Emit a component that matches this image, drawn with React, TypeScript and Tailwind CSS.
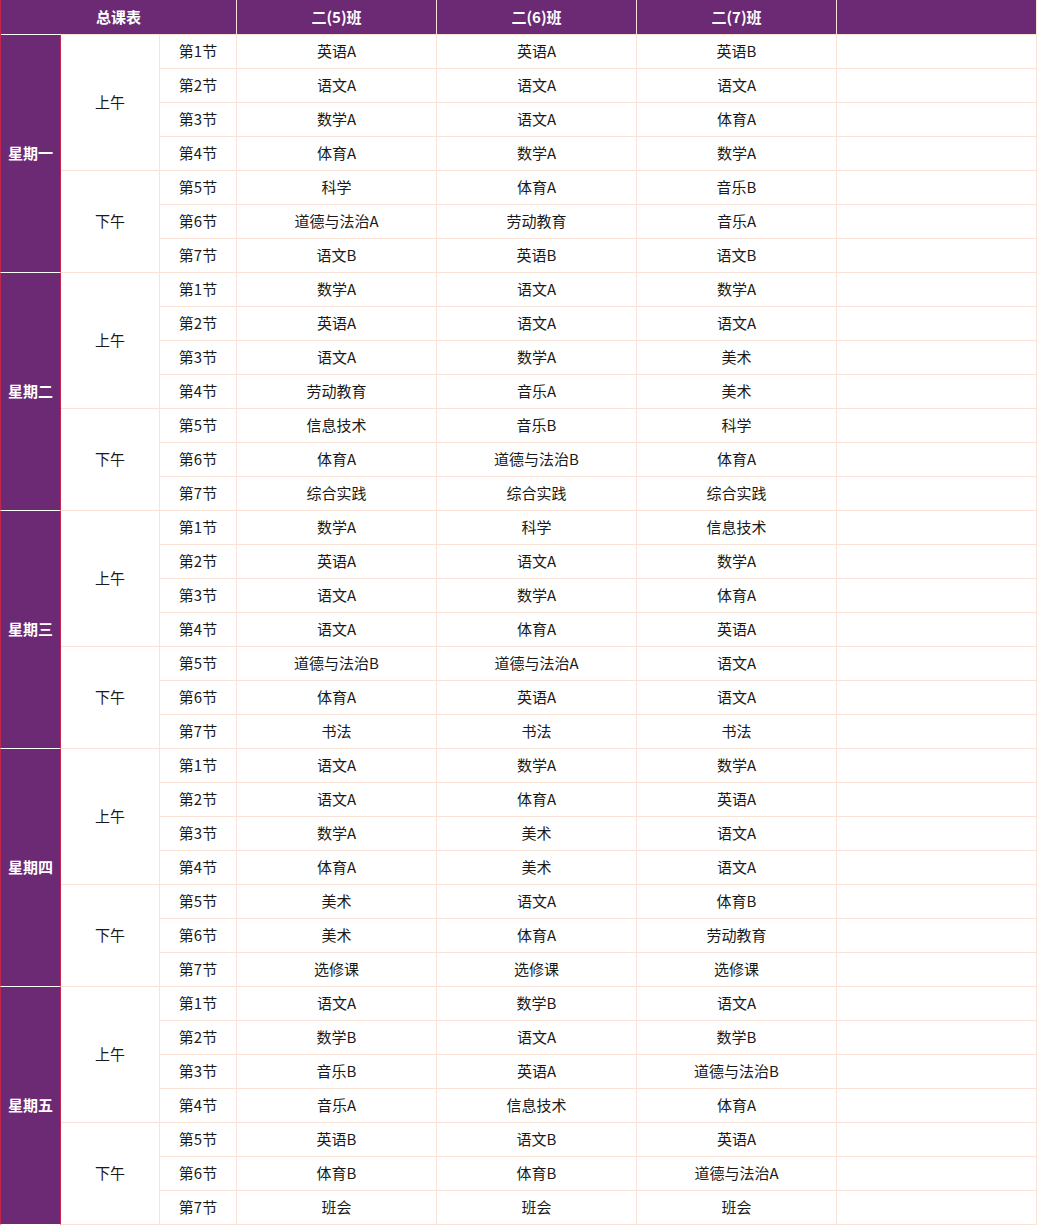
import React from 'react';

const classes = ['二(5)班', '二(6)班', '二(7)班'];

interface Day {
  name: string;
  lessons: string[][];
}

const days: Day[] = [
  {
    name: '星期一',
    lessons: [
      ['英语A', '英语A', '英语B'],
      ['语文A', '语文A', '语文A'],
      ['数学A', '语文A', '体育A'],
      ['体育A', '数学A', '数学A'],
      ['科学', '体育A', '音乐B'],
      ['道德与法治A', '劳动教育', '音乐A'],
      ['语文B', '英语B', '语文B'],
    ],
  },
  {
    name: '星期二',
    lessons: [
      ['数学A', '语文A', '数学A'],
      ['英语A', '语文A', '语文A'],
      ['语文A', '数学A', '美术'],
      ['劳动教育', '音乐A', '美术'],
      ['信息技术', '音乐B', '科学'],
      ['体育A', '道德与法治B', '体育A'],
      ['综合实践', '综合实践', '综合实践'],
    ],
  },
  {
    name: '星期三',
    lessons: [
      ['数学A', '科学', '信息技术'],
      ['英语A', '语文A', '数学A'],
      ['语文A', '数学A', '体育A'],
      ['语文A', '体育A', '英语A'],
      ['道德与法治B', '道德与法治A', '语文A'],
      ['体育A', '英语A', '语文A'],
      ['书法', '书法', '书法'],
    ],
  },
  {
    name: '星期四',
    lessons: [
      ['语文A', '数学A', '数学A'],
      ['语文A', '体育A', '英语A'],
      ['数学A', '美术', '语文A'],
      ['体育A', '美术', '语文A'],
      ['美术', '语文A', '体育B'],
      ['美术', '体育A', '劳动教育'],
      ['选修课', '选修课', '选修课'],
    ],
  },
  {
    name: '星期五',
    lessons: [
      ['语文A', '数学B', '语文A'],
      ['数学B', '语文A', '数学B'],
      ['音乐B', '英语A', '道德与法治B'],
      ['音乐A', '信息技术', '体育A'],
      ['英语B', '语文B', '英语A'],
      ['体育B', '体育B', '道德与法治A'],
      ['班会', '班会', '班会'],
    ],
  },
];

const cell = 'flex items-center justify-center pb-[2px] border-r border-b border-[#fbe2d6] bg-white text-[15px] leading-none text-[#1a1a1a]';
const headCell = 'flex items-center justify-center pb-[2px] border-r border-b border-[#fbe2d6] bg-[#6b2a73] text-[15px] leading-none font-bold text-white';

function PeriodRow({ index, row }: { index: number; row: string[] }) {
  return (
    <>
      <div className={cell}>第{index + 1}节</div>
      {row.map((subject, i) => (
        <div key={i} className={cell}>
          {subject}
        </div>
      ))}
      <div className={cell}></div>
    </>
  );
}

export default function App() {
  return (
    <div
      className="grid w-[1037px] grid-cols-[61px_99px_77px_200px_200px_200px_200px] grid-rows-[35px_repeat(35,34px)]"
      style={{ fontFamily: '"Noto Sans CJK SC", "Noto Sans", sans-serif' }}
    >
      {/* header */}
      <div className="col-span-3 flex flex-col border-l border-r border-l-[#c0264e] border-r-[#fbe2d6] bg-[#6b2a73]">
        <div className="flex flex-1 items-center justify-center pb-[2px] text-[15px] leading-none font-bold text-white">总课表</div>
        <div className="flex h-px">
          <div className="w-[59px] bg-white"></div>
          <div className="flex-1 bg-[#fbe2d6]"></div>
        </div>
      </div>
      {classes.map((c) => (
        <div key={c} className={headCell}>
          {c}
        </div>
      ))}
      <div className={headCell}></div>

      {days.map((day) => (
        <React.Fragment key={day.name}>
          <div className="row-span-7 flex items-center justify-center pb-[2px] border-l border-r border-b border-l-[#c0264e] border-r-[#c0264e] border-b-white bg-[#6b2a73] text-[15px] leading-none font-bold text-white">
            {day.name}
          </div>
          <div className={`row-span-4 ${cell}`}>上午</div>
          {day.lessons.slice(0, 4).map((row, i) => (
            <PeriodRow key={i} index={i} row={row} />
          ))}
          <div className={`row-span-3 ${cell}`}>下午</div>
          {day.lessons.slice(4).map((row, i) => (
            <PeriodRow key={i + 4} index={i + 4} row={row} />
          ))}
        </React.Fragment>
      ))}
    </div>
  );
}
